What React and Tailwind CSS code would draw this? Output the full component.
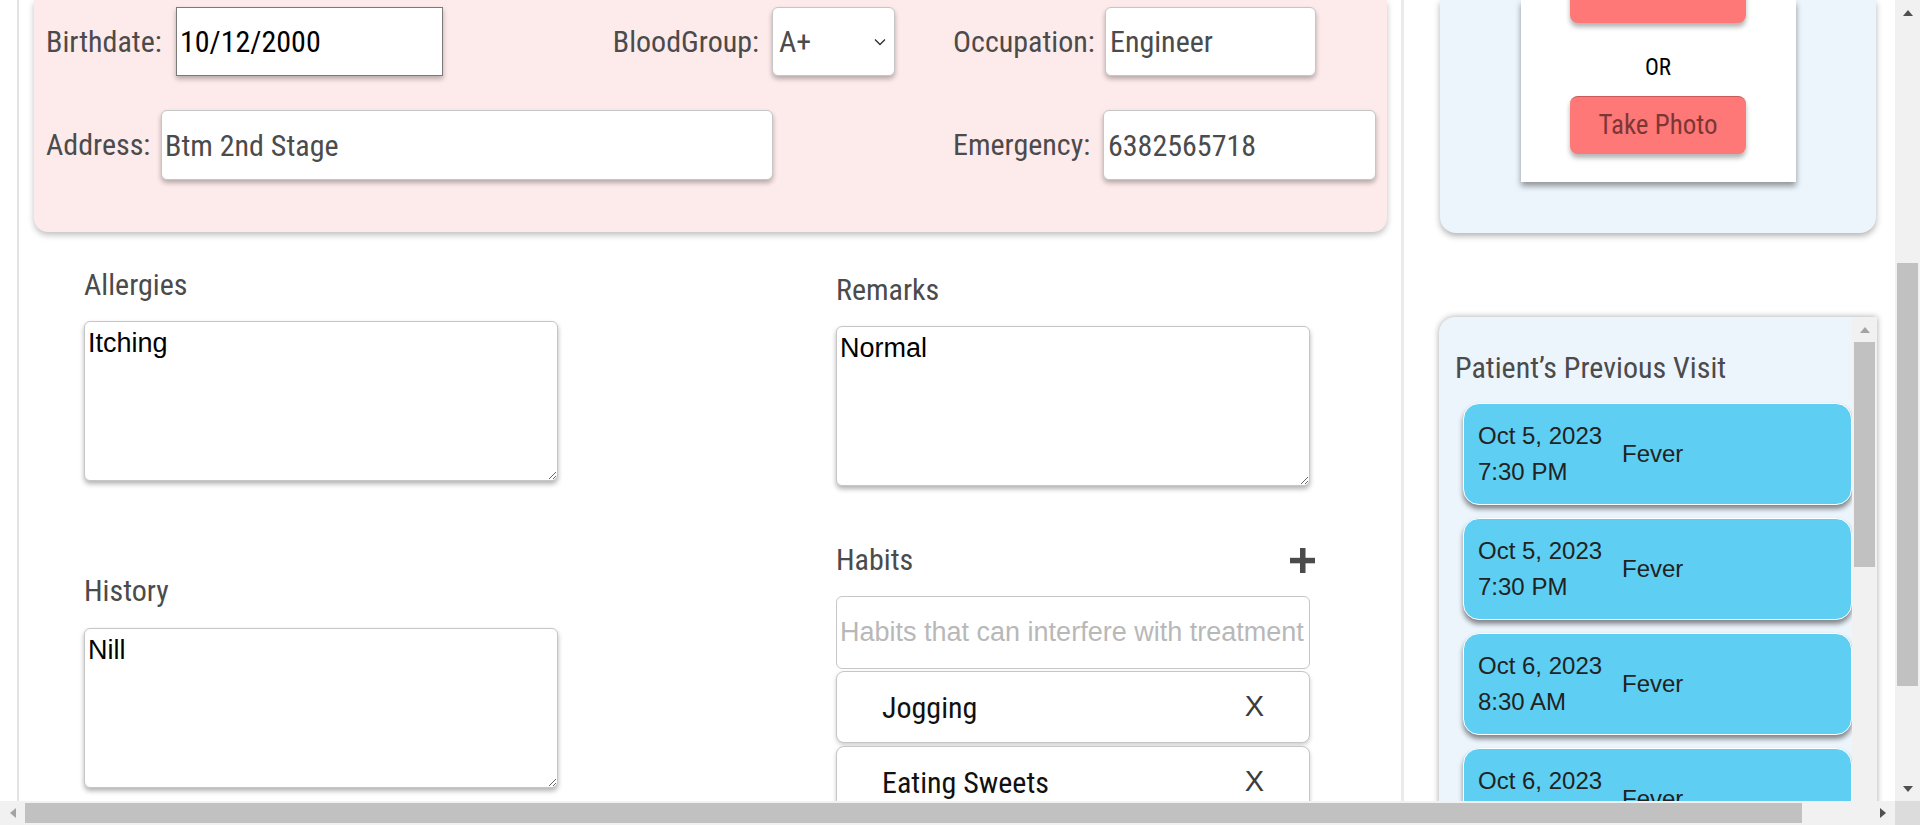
const labelFont = "font-['Roboto',sans-serif] [font-stretch:87.5%]";
const arial = "font-['Liberation_Sans',Arial,sans-serif]";
const label = `${labelFont} text-[30px] leading-[34px] text-[#4b4b4b] whitespace-nowrap`;
const field =
  "h-full rounded-[6px] border border-[#c6c6c6] bg-white shadow-[0_3px_5px_rgba(0,0,0,0.28)] outline-none";

function Triangle({ dir = "up", color = "#505050" }) {
  const pts = {
    up: "0,6 5,0 10,6",
    down: "0,0 10,0 5,6",
    left: "6,0 6,10 0,5",
    right: "0,0 0,10 6,5",
  }[dir];
  const vertical = dir === "up" || dir === "down";
  return (
    <svg width={vertical ? 10 : 6} height={vertical ? 6 : 10}>
      <polygon points={pts} fill={color} />
    </svg>
  );
}

function PinkCard() {
  return (
    <div className="ml-[15px] mr-[14px] rounded-b-[14px] bg-[#fdeaea] pt-[7px] pb-[52px] pl-[12px] shadow-[0_3px_6px_rgba(0,0,0,0.25)]">
      <div className="flex h-[69px] items-center">
        <span className={`${label} w-[130px]`}>Birthdate:</span>
        <input
          type="text"
          defaultValue="10/12/2000"
          className={`${labelFont} h-full w-[267px] border border-[#7a7a7a] bg-white pl-[3px] text-[30px] text-black shadow-[0_3px_5px_rgba(0,0,0,0.28)] outline-none`}
        />
        <div className="flex h-full w-[452px] items-center justify-end">
          <span className={label}>BloodGroup:</span>
          <div
            className={`${field} ml-[13px] flex w-[123px] items-center justify-between pl-[6px] pr-[8px] ${labelFont} text-[30px] text-[#4b4b4b]`}
          >
            <span>A+</span>
            <svg width="12" height="8" viewBox="0 0 12 8">
              <polyline points="1,1.5 6,6.5 11,1.5" fill="none" stroke="#333" strokeWidth="1.4" />
            </svg>
          </div>
        </div>
        <span className={`${label} ml-[58px] w-[152px]`}>Occupation:</span>
        <input
          type="text"
          defaultValue="Engineer"
          className={`${field} ${labelFont} w-[211px] pl-[4px] text-[30px] text-[#4b4b4b]`}
        />
      </div>
      <div className="mt-[34px] flex h-[70px] items-center">
        <span className={`${label} w-[115px]`}>Address:</span>
        <input
          type="text"
          defaultValue="Btm 2nd Stage"
          className={`${field} ${labelFont} w-[612px] pl-[3px] text-[30px] text-[#4b4b4b]`}
        />
        <span className={`${label} ml-[180px] w-[150px]`}>Emergency:</span>
        <input
          type="text"
          defaultValue="6382565718"
          className={`${field} ${labelFont} w-[273px] pl-[4px] text-[30px] text-[#4b4b4b]`}
        />
      </div>
    </div>
  );
}

function Area({ value, className = "" }) {
  return (
    <textarea
      defaultValue={value}
      className={`${arial} block h-[160px] w-[474px] rounded-[6px] border border-[#c6c6c6] bg-white px-[3px] pt-[6px] text-[27px] leading-[31px] text-black shadow-[0_3px_5px_rgba(0,0,0,0.3)] outline-none ${className}`}
    />
  );
}

function HabitItem({ name }) {
  return (
    <div className="flex h-[72px] w-[474px] shrink-0 items-center justify-between rounded-[8px] border border-[#c6c6c6] bg-white pl-[45px] pr-[45px] shadow-[0_2px_4px_rgba(0,0,0,0.2)]">
      <span className={`${labelFont} text-[30px] text-[#111]`}>{name}</span>
      <span className={`${arial} text-[29px] text-[#3c3c3c]`}>X</span>
    </div>
  );
}

function LeftPanel() {
  return (
    <div className="flex w-[1384px] shrink-0 flex-col border-l-2 border-[#e4e4e4]">
      <PinkCard />
      <div className="flex">
        {/* left column */}
        <div className="ml-[65px] flex w-[474px] flex-col pt-[36px]">
          <span className={label}>Allergies</span>
          <Area value="Itching" className="mt-[19px]" />
          <span className={`${label} mt-[93px]`}>History</span>
          <Area value="Nill" className="mt-[20px]" />
        </div>
        {/* right column */}
        <div className="ml-[278px] flex w-[479px] flex-col pt-[41px]">
          <span className={label}>Remarks</span>
          <Area value="Normal" className="mt-[19px] h-[158px]" />
          <div className="mt-[57px] flex h-[34px] items-center justify-between">
            <span className={label}>Habits</span>
            <svg width="25" height="25" viewBox="0 0 25 25">
              <rect x="10" y="0" width="5.5" height="25" fill="#4b4b4b" />
              <rect x="0" y="9.8" width="25" height="5.5" fill="#4b4b4b" />
            </svg>
          </div>
          <input
            type="text"
            placeholder="Habits that can interfere with treatment"
            className={`${arial} mt-[19px] h-[73px] w-[474px] shrink-0 rounded-[6px] border border-[#c6c6c6] bg-white pl-[3px] text-[27px] text-black outline-none placeholder:text-[#b8b8b8]`}
          />
          <div className="mt-[2px] flex flex-col gap-[3px]">
            <HabitItem name="Jogging" />
            <HabitItem name="Eating Sweets" />
          </div>
        </div>
      </div>
    </div>
  );
}

const visits = [
  { date: "Oct 5, 2023", time: "7:30 PM", reason: "Fever" },
  { date: "Oct 5, 2023", time: "7:30 PM", reason: "Fever" },
  { date: "Oct 6, 2023", time: "8:30 AM", reason: "Fever" },
  { date: "Oct 6, 2023", time: "8:30 AM", reason: "Fever" },
];

function RightPanel() {
  return (
    <div className="flex min-w-0 flex-1 flex-col">
      {/* photo card */}
      <div className="ml-[36px] w-[436px] rounded-b-[16px] bg-[#ecf4fc] pb-[51px] shadow-[0_3px_6px_rgba(0,0,0,0.3)]">
        <div className="mx-auto flex w-[275px] flex-col items-center bg-white pb-[28px] shadow-[0_4px_6px_rgba(0,0,0,0.4)]">
          <button className="-mt-[35px] h-[58px] w-[176px] rounded-[8px] border-t border-[#c95a5a] bg-[#ff7878] shadow-[0_4px_5px_rgba(0,0,0,0.3)]" />
          <span className={`${labelFont} mt-[33px] text-[23px] leading-[24px] text-black`}>OR</span>
          <button className={`${labelFont} mt-[16px] h-[58px] w-[176px] rounded-[8px] border-t border-[#c95a5a] bg-[#ff7878] text-[27px] text-[#7d3636] shadow-[0_4px_5px_rgba(0,0,0,0.3)]`}>
            Take Photo
          </button>
        </div>
      </div>

      {/* previous visits */}
      <div className="ml-[35px] mt-[84px] flex h-[600px] w-[438px] shrink-0 overflow-hidden rounded-tl-[16px] bg-[#ecf4fc] shadow-[0_0_6px_rgba(0,0,0,0.35)]">
        <div className="flex-1 pl-[16px] pt-[34px]">
          <div className={label}>Patient’s Previous Visit</div>
          <div className="ml-[8px] mt-[18px] flex flex-col gap-[13px]">
            {visits.map((v, i) => (
              <div
                key={i}
                className={`${arial} flex h-[102px] shrink-0 items-center rounded-[16px] border border-white bg-[#5ecff2] pl-[14px] text-[24px] text-[#222] shadow-[0_4px_5px_rgba(0,0,0,0.45)]`}
              >
                <div className="w-[144px] leading-[36px]">
                  <div>{v.date}</div>
                  <div>{v.time}</div>
                </div>
                <span>{v.reason}</span>
              </div>
            ))}
          </div>
        </div>
        <div className="flex w-[25px] shrink-0 flex-col bg-[#f1f1f1]">
          <div className="flex h-[25px] items-center justify-center">
            <Triangle dir="up" color="#a3a3a3" />
          </div>
          <div className="mx-[2px] h-[225px] bg-[#c1c1c1]" />
        </div>
      </div>
    </div>
  );
}

export default function App() {
  return (
    <div className="flex h-[825px] w-[1920px] flex-col overflow-hidden bg-white">
      <div className="flex min-h-0 flex-1">
        <div className="flex min-w-0 flex-1 overflow-hidden">
          <div className="w-[17px] shrink-0" />
          <LeftPanel />
          <div className="w-[3px] shrink-0 bg-[#ebebeb]" />
          <RightPanel />
        </div>
        {/* page vertical scrollbar */}
        <div className="flex w-[25px] shrink-0 flex-col bg-[#f1f1f1]">
          <div className="flex h-[25px] items-center justify-center">
            <Triangle dir="up" />
          </div>
          <div className="mx-[2px] mt-[238px] h-[423px] bg-[#c1c1c1]" />
          <div className="flex-1" />
          <div className="flex h-[25px] items-center justify-center">
            <Triangle dir="down" />
          </div>
        </div>
      </div>
      {/* page horizontal scrollbar */}
      <div className="flex h-[24px] shrink-0">
        <div className="flex flex-1 items-center bg-[#f1f1f1]">
          <div className="flex w-[25px] items-center justify-center">
            <Triangle dir="left" color="#a3a3a3" />
          </div>
          <div className="h-[20px] w-[1777px] bg-[#c1c1c1]" />
          <div className="flex-1" />
          <div className="flex w-[25px] items-center justify-center">
            <Triangle dir="right" />
          </div>
        </div>
        <div className="w-[25px] bg-[#dcdcdc]" />
      </div>
    </div>
  );
}
